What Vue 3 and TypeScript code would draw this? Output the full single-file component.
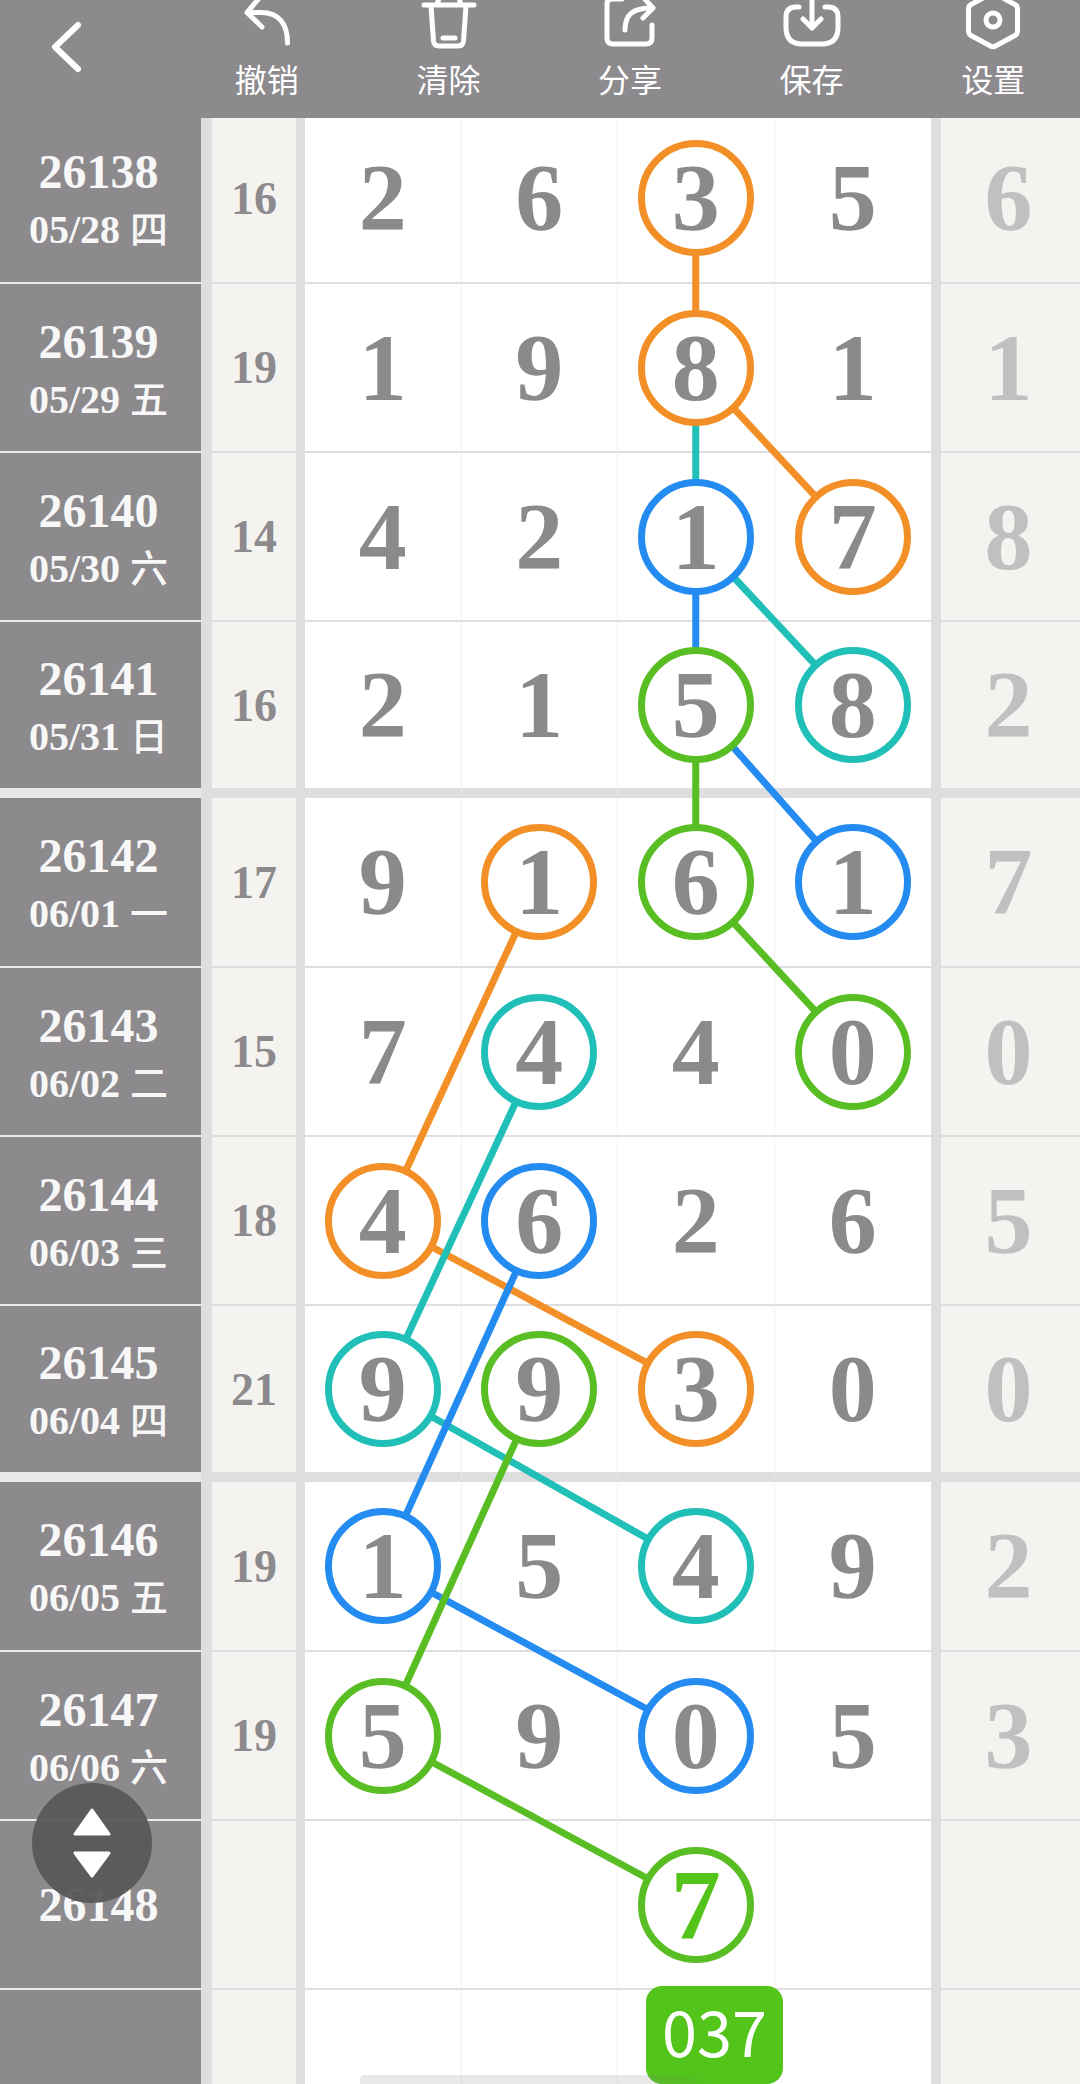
<script setup lang="ts">
import { nextTick, onBeforeUnmount, onMounted, ref } from 'vue'

type Color = 'orange' | 'teal' | 'blue' | 'green'

interface Draw {
  period: string
  date?: string
  week?: string
  sum?: string
  digits: string[]
  extra?: string
}

interface Line {
  x1: number
  y1: number
  x2: number
  y2: number
  color: Color
}

const draws: Draw[] = [
  { period: '26138', date: '05/28', week: '四', sum: '16', digits: ['2', '6', '3', '5'], extra: '6' },
  { period: '26139', date: '05/29', week: '五', sum: '19', digits: ['1', '9', '8', '1'], extra: '1' },
  { period: '26140', date: '05/30', week: '六', sum: '14', digits: ['4', '2', '1', '7'], extra: '8' },
  { period: '26141', date: '05/31', week: '日', sum: '16', digits: ['2', '1', '5', '8'], extra: '2' },
  { period: '26142', date: '06/01', week: '一', sum: '17', digits: ['9', '1', '6', '1'], extra: '7' },
  { period: '26143', date: '06/02', week: '二', sum: '15', digits: ['7', '4', '4', '0'], extra: '0' },
  { period: '26144', date: '06/03', week: '三', sum: '18', digits: ['4', '6', '2', '6'], extra: '5' },
  { period: '26145', date: '06/04', week: '四', sum: '21', digits: ['9', '9', '3', '0'], extra: '0' },
  { period: '26146', date: '06/05', week: '五', sum: '19', digits: ['1', '5', '4', '9'], extra: '2' },
  { period: '26147', date: '06/06', week: '六', sum: '19', digits: ['5', '9', '0', '5'], extra: '3' },
  { period: '26148', digits: ['', '', '7', ''] },
  { period: '', digits: ['', '', '', ''] },
]

// Each chain lists the "row-column" keys of the balls it joins, in order.
// A ball shared by two chains takes the colour of the later one.
const chains: { color: Color; keys: string[] }[] = [
  { color: 'teal', keys: ['1-2', '2-2', '3-3'] },
  { color: 'orange', keys: ['0-2', '1-2', '2-3'] },
  { color: 'blue', keys: ['2-2', '3-2', '4-3'] },
  { color: 'green', keys: ['3-2', '4-2', '5-3'] },
  { color: 'orange', keys: ['4-1', '6-0', '7-2'] },
  { color: 'teal', keys: ['5-1', '7-0', '8-2'] },
  { color: 'blue', keys: ['6-1', '8-0', '9-2'] },
  { color: 'green', keys: ['7-1', '9-0', '10-2'] },
]

const rings: Record<string, Color> = {}
for (const chain of chains) {
  for (const key of chain.keys) rings[key] = chain.color
}

const chart = ref<HTMLElement | null>(null)
const lines = ref<Line[]>([])
let observer: ResizeObserver | undefined

function measure() {
  const root = chart.value
  if (!root) return
  const base = root.getBoundingClientRect()
  const center = (key: string) => {
    const r = root.querySelector(`[data-key="${key}"]`)!.getBoundingClientRect()
    return { x: r.left + r.width / 2 - base.left, y: r.top + r.height / 2 - base.top }
  }
  lines.value = chains.flatMap(({ color, keys }) =>
    keys.slice(1).map((key, i) => {
      const a = center(keys[i])
      const b = center(key)
      return { x1: a.x, y1: a.y, x2: b.x, y2: b.y, color }
    }),
  )
}

onMounted(async () => {
  await nextTick()
  measure()
  observer = new ResizeObserver(measure)
  if (chart.value) observer.observe(chart.value)
})
onBeforeUnmount(() => observer?.disconnect())
</script>

<template>
  <div class="page">
    <header class="bar">
      <button class="back" type="button" aria-label="返回">
        <svg width="40" height="60" viewBox="0 0 40 60"><path d="M32 8L9 30L32 52" stroke-width="6" /></svg>
      </button>
      <nav class="tools">
        <button class="tool" type="button">
          <svg class="icon" viewBox="0 0 60 52"><path d="M23 -3L10 12.5L25 27M10 12.5H24C42 12.5 50.5 24 50.5 43" /></svg>
          <span>撤销</span>
        </button>
        <button class="tool" type="button">
          <svg class="icon" viewBox="0 0 60 52"><path d="M6 5H56M19 4L22 -4H40L43 4M13 6L15.5 41Q16 46 21 46H40Q45 46 45.500 41L48 6M25 38H37" /></svg>
          <span>清除</span>
        </button>
        <button class="tool" type="button">
          <svg class="icon" viewBox="0 0 60 52"><path d="M22 -1H12Q7 -1 7 4V38Q7 44 13 44H46Q52 44 52 38V25M25 30C25 15 32 8 52 8M42 -4L53 8L43 18" /></svg>
          <span>分享</span>
        </button>
        <button class="tool" type="button">
          <svg class="icon" viewBox="0 0 60 52"><path d="M17 7H14Q4 7 4 17V27Q4 44 20 44H40Q56 44 56 27V17Q56 7 46 7H43M30 -4V27M21 19L30 28L39 19" /></svg>
          <span>保存</span>
        </button>
        <button class="tool" type="button">
          <svg class="icon" viewBox="0 0 60 52"><path d="M27.500 -6Q30 -7.500 32.500 -6L52 4.500Q54.500 6 54.500 9V31Q54.500 34 52 35.500L32.500 46Q30 47.500 27.500 46L8 35.500Q5.500 34 5.500 31V9Q5.500 6 8 4.500Z" /><circle cx="30" cy="20" r="7" /></svg>
          <span>设置</span>
        </button>
      </nav>
    </header>

    <main ref="chart" class="chart">
      <table class="grid">
        <colgroup>
          <col class="c-period" />
          <col class="c-sum" />
          <col v-for="n in 4" :key="n" />
          <col class="c-extra" />
        </colgroup>
        <tbody>
          <tr v-for="(draw, r) in draws" :key="r" :class="{ first: r % 4 === 0, last: r === 3 || r === 7 }">
            <th class="period" :class="{ dated: draw.date }" scope="row">
              <div v-if="draw.period" class="no">{{ draw.period }}</div>
              <div v-if="draw.date" class="date">{{ draw.date }} <span class="week">{{ draw.week }}</span></div>
            </th>
            <td class="sum">{{ draw.sum }}</td>
            <td v-for="(digit, c) in draw.digits" :key="c" class="cell">
              <span v-if="digit" class="ball" :class="[rings[`${r}-${c}`], { pick: r === 10 }]" :data-key="`${r}-${c}`">{{ digit }}</span>
              <span v-if="r === 11 && c === 2" class="tag">037</span>
            </td>
            <td class="extra">{{ draw.extra }}</td>
          </tr>
        </tbody>
      </table>
      <svg class="links" aria-hidden="true">
        <line v-for="(l, i) in lines" :key="i" :class="l.color" :x1="l.x1" :y1="l.y1" :x2="l.x2" :y2="l.y2" />
      </svg>
    </main>

    <div class="scroll"></div>
    <button class="fab" type="button" aria-label="滚动">
      <svg width="40" height="72" viewBox="0 0 40 72">
        <path d="M20 3L37 27H3ZM3 46H37L20 69Z" />
      </svg>
    </button>
  </div>
</template>

<style>
body {
  margin: 0;
}
</style>

<style scoped>
.page {
  position: relative;
  display: flex;
  flex-direction: column;
  height: 100vh;
  overflow: hidden;
  background: #fff;
  font-family: "Liberation Serif", "Noto Sans CJK SC", serif;
  --orange: #f28f26;
  --teal: #20bfb8;
  --blue: #248cf0;
  --green: #58be24;
  --rule: #dedddf;
}
button {
  padding: 0;
  border: 0;
  background: none;
  color: inherit;
}
.bar {
  display: flex;
  flex: none;
  height: 118px;
  overflow: hidden;
  background: #8c8a8d;
  color: #fff;
}
.bar svg {
  fill: none;
  stroke: #fff;
  stroke-linecap: round;
  stroke-linejoin: round;
}
.back {
  display: flex;
  flex: none;
  width: 176px;
  padding: 17px 0 0 46px;
}
.tools {
  display: flex;
  flex: 1;
  margin-right: -4px;
}
.tool {
  display: flex;
  flex: 1;
  flex-direction: column;
  align-items: center;
  font: 32px/48px "Noto Sans CJK SC", sans-serif;
}
.icon {
  width: 60px;
  height: 52px;
  margin-bottom: 2px;
  stroke-width: 5;
}
.chart {
  position: relative;
  flex: 1;
  overflow: hidden;
}
.grid {
  width: 100%;
  margin-top: -4px;
  table-layout: fixed;
  border-spacing: 0;
}
.c-period {
  width: 201px;
}
.c-sum {
  width: 104px;
}
.c-extra {
  width: 149px;
}
th,
td {
  box-sizing: border-box;
  height: 169px;
  padding: 0;
  border-bottom: 2px solid var(--rule);
  text-align: center;
  vertical-align: middle;
}
.first > * {
  height: 170px;
}
.last > * {
  height: 176px;
  border-bottom-width: 10px;
}
.period {
  padding-right: 4px;
  border-bottom-color: #e8e7e9;
  background: #8c8a8d;
  color: #f8f7f8;
}
.dated {
  padding-top: 4px;
}
.no {
  font-size: 48px;
  line-height: 60px;
}
.date {
  font-size: 40px;
  line-height: 56px;
  white-space: nowrap;
}
.week {
  font-size: 38px;
  font-weight: 500;
  line-height: 40px;
}
.sum {
  border-right: 9px solid var(--rule);
  border-left: 11px solid var(--rule);
  background: #f5f3f0;
  color: #8c8a8d;
  font-size: 46px;
  font-weight: bold;
}
.cell {
  position: relative;
  border-right: 1px solid #f1f0f2;
}
.cell:nth-child(6) {
  border-right: 0;
}
.extra {
  padding-right: 4px;
  border-left: 10px solid var(--rule);
  background: #f5f3f0;
  color: #c1bfc1;
  font-size: 96px;
  font-weight: bold;
  line-height: 116px;
}
.ball {
  position: relative;
  z-index: 2;
  display: block;
  box-sizing: border-box;
  width: 116px;
  height: 116px;
  margin: 0 auto;
  border: 7px solid transparent;
  border-radius: 50%;
  color: #8a898b;
  font-size: 96px;
  font-weight: bold;
  line-height: 102px;
}
.ball.orange {
  border-color: var(--orange);
  background: #fff;
}
.ball.teal {
  border-color: var(--teal);
  background: #fff;
}
.ball.blue {
  border-color: var(--blue);
  background: #fff;
}
.ball.green {
  border-color: var(--green);
  background: #fff;
}
.ball.pick {
  color: #54c41b;
  font-size: 100px;
}
.tag {
  position: absolute;
  z-index: 3;
  top: -4px;
  left: 28px;
  width: 137px;
  height: 98px;
  border-radius: 16px;
  background: #52c41a;
  color: #fff;
  font: 63px/88px "Noto Sans CJK SC", sans-serif;
}
.links {
  position: absolute;
  z-index: 1;
  top: 0;
  left: 0;
  width: 100%;
  height: 100%;
  stroke-width: 7;
  pointer-events: none;
}
.links .orange {
  stroke: var(--orange);
}
.links .teal {
  stroke: var(--teal);
}
.links .blue {
  stroke: var(--blue);
}
.links .green {
  stroke: var(--green);
}
.scroll {
  position: absolute;
  z-index: 4;
  bottom: 0;
  left: 360px;
  width: 360px;
  height: 9px;
  border-radius: 5px 5px 0 0;
  background: linear-gradient(90deg, rgba(120, 120, 120, 0.17) 80%, transparent);
}
.fab {
  position: absolute;
  z-index: 5;
  bottom: 181px;
  left: 32px;
  display: flex;
  align-items: center;
  justify-content: center;
  width: 120px;
  height: 120px;
  border-radius: 50%;
  background: rgba(88, 90, 88, 0.96);
}
.fab svg {
  fill: #fff;
  stroke: #fff;
  stroke-width: 3;
  stroke-linejoin: round;
}
</style>
